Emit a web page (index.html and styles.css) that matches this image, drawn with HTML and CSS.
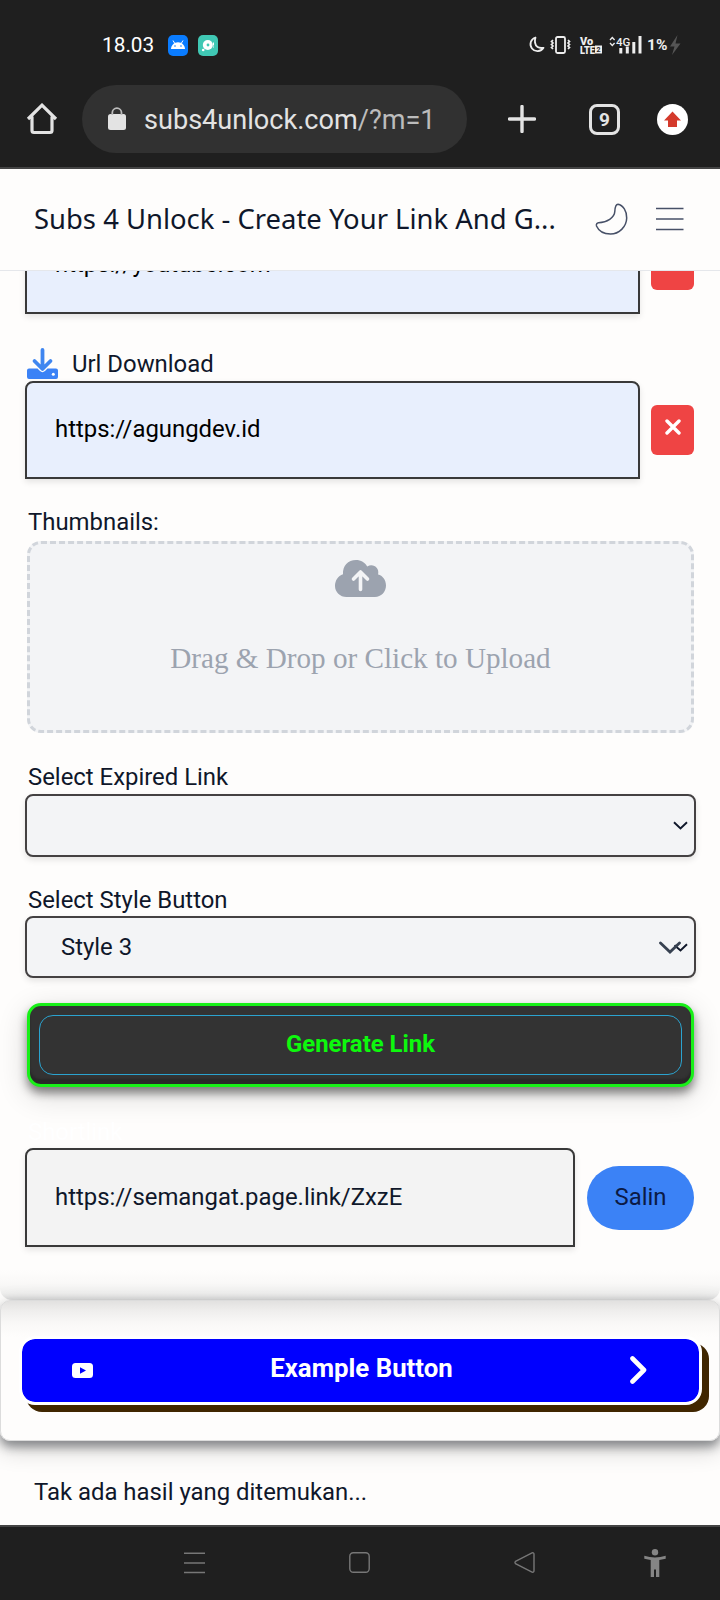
FILE: index.html
```html
<!DOCTYPE html>
<html lang="id">
<head>
<meta charset="utf-8">
<title>Subs 4 Unlock</title>
<link rel="stylesheet" href="styles.css">
</head>
<body>
<div class="browser">
  <div class="status">
    <span class="time">18.03</span>
    <svg class="app" width="20" height="21" viewBox="0 0 20 21"><rect width="20" height="21" rx="5" fill="#0a7cff"/><path d="M3 14C3.300 10 6 7.200 10 7.200S16.700 10 17 14Z" fill="#fff"/><path d="M5 5.500 6.800 8.500M15 5.500 13.200 8.500" stroke="#fff" stroke-width="1"/><circle cx="7" cy="11" r=".8" fill="#0a7cff"/><circle cx="13" cy="11" r=".8" fill="#0a7cff"/></svg>
    <svg class="app2" width="20" height="21" viewBox="0 0 20 21"><rect width="20" height="21" rx="5" fill="#40c8b4"/><circle cx="9.800" cy="10" r="5" fill="#fff"/><circle cx="10" cy="10" r="1.400" fill="#40c8b4"/><circle cx="5.200" cy="15" r="1.300" fill="#fff"/><path d="M15.500 7.500v5" stroke="#fff" stroke-width="1" stroke-dasharray="3 1"/></svg>
    <svg class="sys" width="156" height="24" viewBox="0 0 156 24">
      <path d="M7.500 4.500A7 7 0 1 0 15.500 14.800Q8 16 7 9.500 6.700 7 7.500 4.500Z" fill="none" stroke="#eee" stroke-width="1.800" stroke-linejoin="round"/>
      <rect x="28" y="4" width="9" height="16" rx="1.500" fill="none" stroke="#eee" stroke-width="1.800"/>
      <path d="M25 7l-1.500 1.500L25 10l-1.500 1.500L25 13l-1.500 1.500L25 16M40 7l1.500 1.500L40 10l1.500 1.500L40 13l1.500 1.500L40 16" fill="none" stroke="#eee" stroke-width="1.700"/>
      <text x="52" y="11.500" class="s-vo">Vo</text><text x="52" y="20.500" class="s-lte" textLength="15" lengthAdjust="spacingAndGlyphs">LTE</text>
      <rect x="67" y="12.500" width="7" height="8" fill="#eee"/><text x="68.500" y="19.300" class="s-two">2</text>
      <path d="M82 7l2.300-2.500L86.600 7M82 10l2.300 2.500L86.600 10" fill="none" stroke="#eee" stroke-width="1.300"/>
      <text x="88" y="12.500" class="s-4g">4G</text>
      <path d="M92.800 15v5.500M99.300 13.500v7M105.800 9v11.500M112 3v17.500" stroke="#eee" stroke-width="3"/>
      <text x="119" y="17.300" class="s-pct">1%</text>
      <path d="M149.500 2 142 13.500h4.500L144 22l8.500-11.500H147.500Z" fill="#555"/>
    </svg>
  </div>
  <div class="toolbar">
    <svg class="home" width="32" height="32" viewBox="0 0 32 32"><path d="M2 16 16 2.200 30 16M6 13.500V27.500a2 2 0 0 0 2 2H24a2 2 0 0 0 2-2V13.500" fill="none" stroke="#e3e3e3" stroke-width="3.200"/></svg>
    <div class="omnibox">
      <svg class="lock" width="18" height="24" viewBox="0 0 18 24"><rect x="0" y="7" width="18" height="16" rx="2.500" fill="#e3e3e3"/><path d="M4.300 8V5.800a4.600 4.600 0 0 1 9.200 0V8" fill="none" stroke="#bcbcbc" stroke-width="1.800"/></svg>
      <span class="url">subs4unlock.com<span class="path">/?m=1</span></span>
    </div>
    <svg class="plus" width="28" height="28" viewBox="0 0 28 28"><path d="M14 1.500v25M1.500 14h25" stroke="#e3e3e3" stroke-width="3.400" stroke-linecap="round"/></svg>
    <span class="tabs">9</span>
    <svg class="update" width="31" height="31" viewBox="0 0 31 31"><circle cx="15.500" cy="15.500" r="15.500" fill="#fff"/><path d="M15.500 7.500 24 16.500H20V23H11V16.500H7Z" fill="#d43a2c"/></svg>
  </div>
</div>
<header class="site">
  <h1 class="title">Subs 4 Unlock - Create Your Link And G...</h1>
  <svg class="moon" width="33" height="34" viewBox="0 0 33 34"><path d="M19.800 9.500C20 5 20.500 2.300 23 2.200 28 3 32 9.500 31.700 16 31.500 25 24 32 15.500 32 8.500 32 3.500 28.500 1.500 24 1 22 2 21.100 3.500 20.800 12 20.500 19.500 15.500 19.800 9.500Z" fill="none" stroke="#475067" stroke-width="1.500"/></svg>
  <svg class="burger" width="28" height="24" viewBox="0 0 28 24"><path d="M0 1.500h27.500M0 12h27.500M0 22.500h27.500" stroke="#475067" stroke-width="1.700"/></svg>
</header>
<main class="form">
  <div class="row first">
    <div class="input">https://youtube.com</div>
    <div class="del"></div>
  </div>
  <div class="label dl">
    <svg width="31" height="31" viewBox="0 0 31 31"><path d="M3 20.500h7.500l2.500 2.500a3.700 3.700 0 0 0 5 0l2.500-2.500H29a2 2 0 0 1 2 2v6.500a2 2 0 0 1-2 2H2a2 2 0 0 1-2-2v-6.500a2 2 0 0 1 2-2Z" fill="#3b82f6"/><circle cx="26.300" cy="26.200" r="1.500" fill="#fff"/><path d="M15.500 2v18M7.500 13l8 8 8-8" fill="none" stroke="#3f86f0" stroke-width="3.800" stroke-linecap="round" stroke-linejoin="round"/></svg>
    <span>Url Download</span>
  </div>
  <div class="row">
    <div class="input">https://agungdev.id</div>
    <div class="del"><svg width="16" height="16" viewBox="0 0 16 16"><path d="M2 2l12 12M14 2L2 14" stroke="#fff" stroke-width="3.400" stroke-linecap="round"/></svg></div>
  </div>
  <div class="label thumb">Thumbnails:</div>
  <div class="drop">
    <svg width="51" height="37" viewBox="0 0 51 37"><path d="M11.500 37C5 37 0 32 0 26 0 20.500 3 16 8 14.200 7.500 6 13 0 21 0c5 0 9 2.500 11.200 6.500 6-3.500 12.500 1.500 10.900 8C47.500 15.500 51 20 51 25.500 51 32 46 37 40 37Z" fill="#9ca3af"/><path d="M25.500 29.500V12.500M18.500 19l7-7 7 7" fill="none" stroke="#f3f4f6" stroke-width="3.600" stroke-linecap="round" stroke-linejoin="round"/></svg>
    <span class="drop-text">Drag &amp; Drop or Click to Upload</span>
  </div>
  <div class="label expired">Select Expired Link</div>
  <div class="select s1"><span></span><svg width="15" height="9" viewBox="0 0 15 9"><path d="M1 1.200 7.500 7.500 14 1.200" fill="none" stroke="#0f172a" stroke-width="1.900"/></svg></div>
  <div class="label style">Select Style Button</div>
  <div class="select s2"><span>Style 3</span><svg width="29" height="13" viewBox="0 0 29 13"><path d="M15.500 4.200 21.500 9.500 28 3.200" fill="none" stroke="#0f172a" stroke-width="1.900"/><path d="M1.500 2 11 11 20.500 2" fill="none" stroke="#374151" stroke-width="2.800" stroke-linecap="round"/></svg></div>
  <div class="generate"><div class="generate-in">Generate Link</div></div>
  <div class="label short">Shortlink</div>
  <div class="row out">
    <div class="input result">https://semangat.page.link/ZxzE</div>
    <div class="copy">Salin</div>
  </div>
</main>
<section class="example">
  <div class="ex-btn">
    <svg width="21" height="15" viewBox="0 0 21 15"><rect width="21" height="15" rx="3.500" fill="#fff"/><path d="M8 4.300v6.400l6-3.200Z" fill="#00f"/></svg>
    <span>Example Button</span>
    <svg class="chev" width="17" height="28" viewBox="0 0 17 28"><path d="M2.500 2.500 14 14 2.500 25.500" fill="none" stroke="#fff" stroke-width="4.600" stroke-linecap="round" stroke-linejoin="round"/></svg>
  </div>
</section>
<p class="empty">Tak ada hasil yang ditemukan...</p>
<nav class="sysnav">
  <svg width="21" height="22" viewBox="0 0 21 22"><path d="M0 1.200h21M0 11h21M0 20.500h21" stroke="#777" stroke-width="1.600"/></svg>
  <svg width="21" height="21" viewBox="0 0 21 21"><rect x=".8" y=".8" width="19.400" height="19.400" rx="3.500" fill="none" stroke="#777" stroke-width="1.400"/></svg>
  <svg width="21" height="21" viewBox="0 0 21 21"><path d="M1.500 9.400 18 .9q2-.5 2 1.600v16q0 2.100-2 1.600L1.500 11.600q-1-1.100 0-2.200Z" fill="none" stroke="#777" stroke-width="1.400"/></svg>
  <svg width="22" height="28" viewBox="0 0 22 28"><circle cx="11" cy="3.300" r="3.200" fill="#858585"/><path d="M.3 6.700Q11 10.300 21.700 6.700V9.700L15.300 11V28H12V20.500H10V28H6.700V11L.3 9.700Z" fill="#858585"/></svg>
</nav>
</body>
</html>
```
FILE: styles.css
```css
* { box-sizing: border-box; }
body {
  margin: 0;
  width: 720px;
  height: 1600px;
  overflow: hidden;
  background: #fefdfc;
  color: #0f172a;
  font: 23.900px/32px Roboto, sans-serif;
  display: flex;
  flex-direction: column;
}
svg { display: block; flex: none; }

.browser { height: 169px; flex: none; background: #1f1f1f; border-bottom: 2px solid #444; }
.status { height: 85px; padding: 5px 36px 0 102px; display: flex; align-items: center; }
.time { width: 52px; margin-right: 14px; font-size: 20.800px; color: #fff; white-space: nowrap; }
.app2 { margin-left: 10px; }
.sys { margin-left: auto; }
.sys text { fill: #eee; }
.s-vo, .s-lte { font: 900 11px Roboto, sans-serif; }
.sys .s-two { font: 700 7px Roboto, sans-serif; fill: #1f1f1f; }
.s-4g { font: 500 11.500px Roboto, sans-serif; }
.s-pct { font: 700 15.500px Roboto, sans-serif; }

.toolbar { height: 68px; display: flex; align-items: center; padding-left: 26px; }
.omnibox { width: 385px; height: 68px; margin-left: 24px; border-radius: 34px; background: #313131; display: flex; align-items: center; padding-left: 26px; }
.url { margin-left: 18px; padding-top: 2px; color: #e3e3e3; font-size: 27.100px; white-space: nowrap; }
.path { color: #bcbcbc; }
.plus { margin-left: 41px; }
.tabs { width: 31px; height: 31px; margin-left: 53px; border: 3px solid #e3e3e3; border-radius: 8px; color: #e3e3e3; font: 700 19px/25px Roboto, sans-serif; text-align: center; }
.update { margin-left: 37px; }

.site { height: 101px; flex: none; background: #fefdfc; display: flex; align-items: center; padding: 0 36px 2px 34px; position: relative; z-index: 1; }
/* hairline laid over the scrolled content */
.site::after { content: ""; position: absolute; left: 0; right: 0; top: 101px; height: 1px; background: #e5e7eb; }
.title { width: 561px; margin: 0; font: 400 27.430px/40px "Noto Sans", sans-serif; white-space: nowrap; }
.burger { margin-left: 28px; }

.form { height: 1030px; flex: none; overflow: hidden; padding: 0 26px 0 27px; border-radius: 0 0 12px 12px; background: linear-gradient(to top, #dedede 0, #f0f0ef 7px, #f9f8f7 16px, #fefdfc 30px); }
.row { display: flex; align-items: center; height: 98px; margin: 0 0 0 -2px; justify-content: space-between; }
.first { margin-top: -54px; }
.input { width: 615px; height: 98px; border: 2px solid #393939; border-radius: 8px 8px 0 0; background: #e8effd; color: #000; padding: 0 28px; line-height: 92px; box-shadow: 0 3px 6px rgba(0, 0, 0, .1); white-space: nowrap; }
.del { width: 43px; height: 50px; border-radius: 6px; background: #ef4444; display: flex; justify-content: center; padding-top: 14px; }
.label { white-space: nowrap; padding-left: 1px; }
.dl { margin-top: 32px; height: 35px; padding-left: 0; display: flex; align-items: center; gap: 14px; }
.thumb { margin-top: 25px; height: 37px; line-height: 36px; }
.drop { height: 192px; border: 3px dashed #d1d5db; border-radius: 14px; background: #f3f4f6; display: flex; flex-direction: column; align-items: center; padding-top: 16px; }
.drop-text { margin-top: 41px; font: 29.150px/40px "Liberation Serif", serif; color: #9ca3af; white-space: nowrap; }
.expired { margin-top: 27px; height: 34px; line-height: 34px; }
.select { width: 671px; margin-left: -2px; border: 2px solid #444142; border-radius: 8px; background: #f3f4f6; box-shadow: 0 3px 6px rgba(0, 0, 0, .1); display: flex; align-items: center; justify-content: space-between; padding: 0 6px 0 34px; }
.s1 { height: 63px; }
.s2 { height: 62px; }
.style { margin-top: 27px; height: 32px; }
.generate { height: 84px; margin-top: 25px; border: 3px solid #18f018; border-radius: 14px; background: #333; padding: 9px; box-shadow: inset 0 -5px 2px #292929, 0 6px 10px rgba(0, 0, 0, .45), 0 8px 30px rgba(0, 0, 0, .16); }
.generate-in { height: 60px; border: 1px solid #2ba3cf; border-radius: 14px; color: #0df80d; font-weight: 700; line-height: 56px; text-align: center; }
.short { margin-top: 29px; height: 32px; color: #fff; }
.out { height: 99px; }
.result { width: 550px; height: 99px; background: #f3f3f3; color: #0f172a; line-height: 95px; }
.copy { width: 107px; height: 64px; border-radius: 32px; background: #3b82f6; color: #0b1a45; line-height: 62px; text-align: center; }

.example { height: 141px; flex: none; border: 1px solid #dcdcdc; border-radius: 10px; background: linear-gradient(#e2e1e0 0, #efeeed 10px, #f9f8f7 22px, #fefdfc 36px); padding: 35px 17px 0 18px; box-shadow: 0 6px 10px rgba(40, 45, 50, .45), 0 8px 25px rgba(0, 0, 0, .2); }
.ex-btn { width: 683px; height: 69px; border: 3px solid #fff; border-radius: 16px; background: #00f padding-box; box-shadow: 7px 7px #402600; color: #fff; font-size: 25.800px; font-weight: 700; display: flex; align-items: center; justify-content: space-between; padding: 0 52px 0 50px; }
.ex-btn span { padding-bottom: 5px; }
.chev { margin-bottom: 2px; }
.empty { margin: 0; height: 84px; flex: none; padding: 35px 35px 0 34px; white-space: nowrap; }
.sysnav { height: 75px; flex: none; border-top: 2px solid #444; background: #1f1f1f; display: flex; align-items: center; padding: 0 0 2px 184px; }
.sysnav svg + svg { margin-left: 144px; }
.sysnav svg:last-child { margin-left: 109px; }
```
